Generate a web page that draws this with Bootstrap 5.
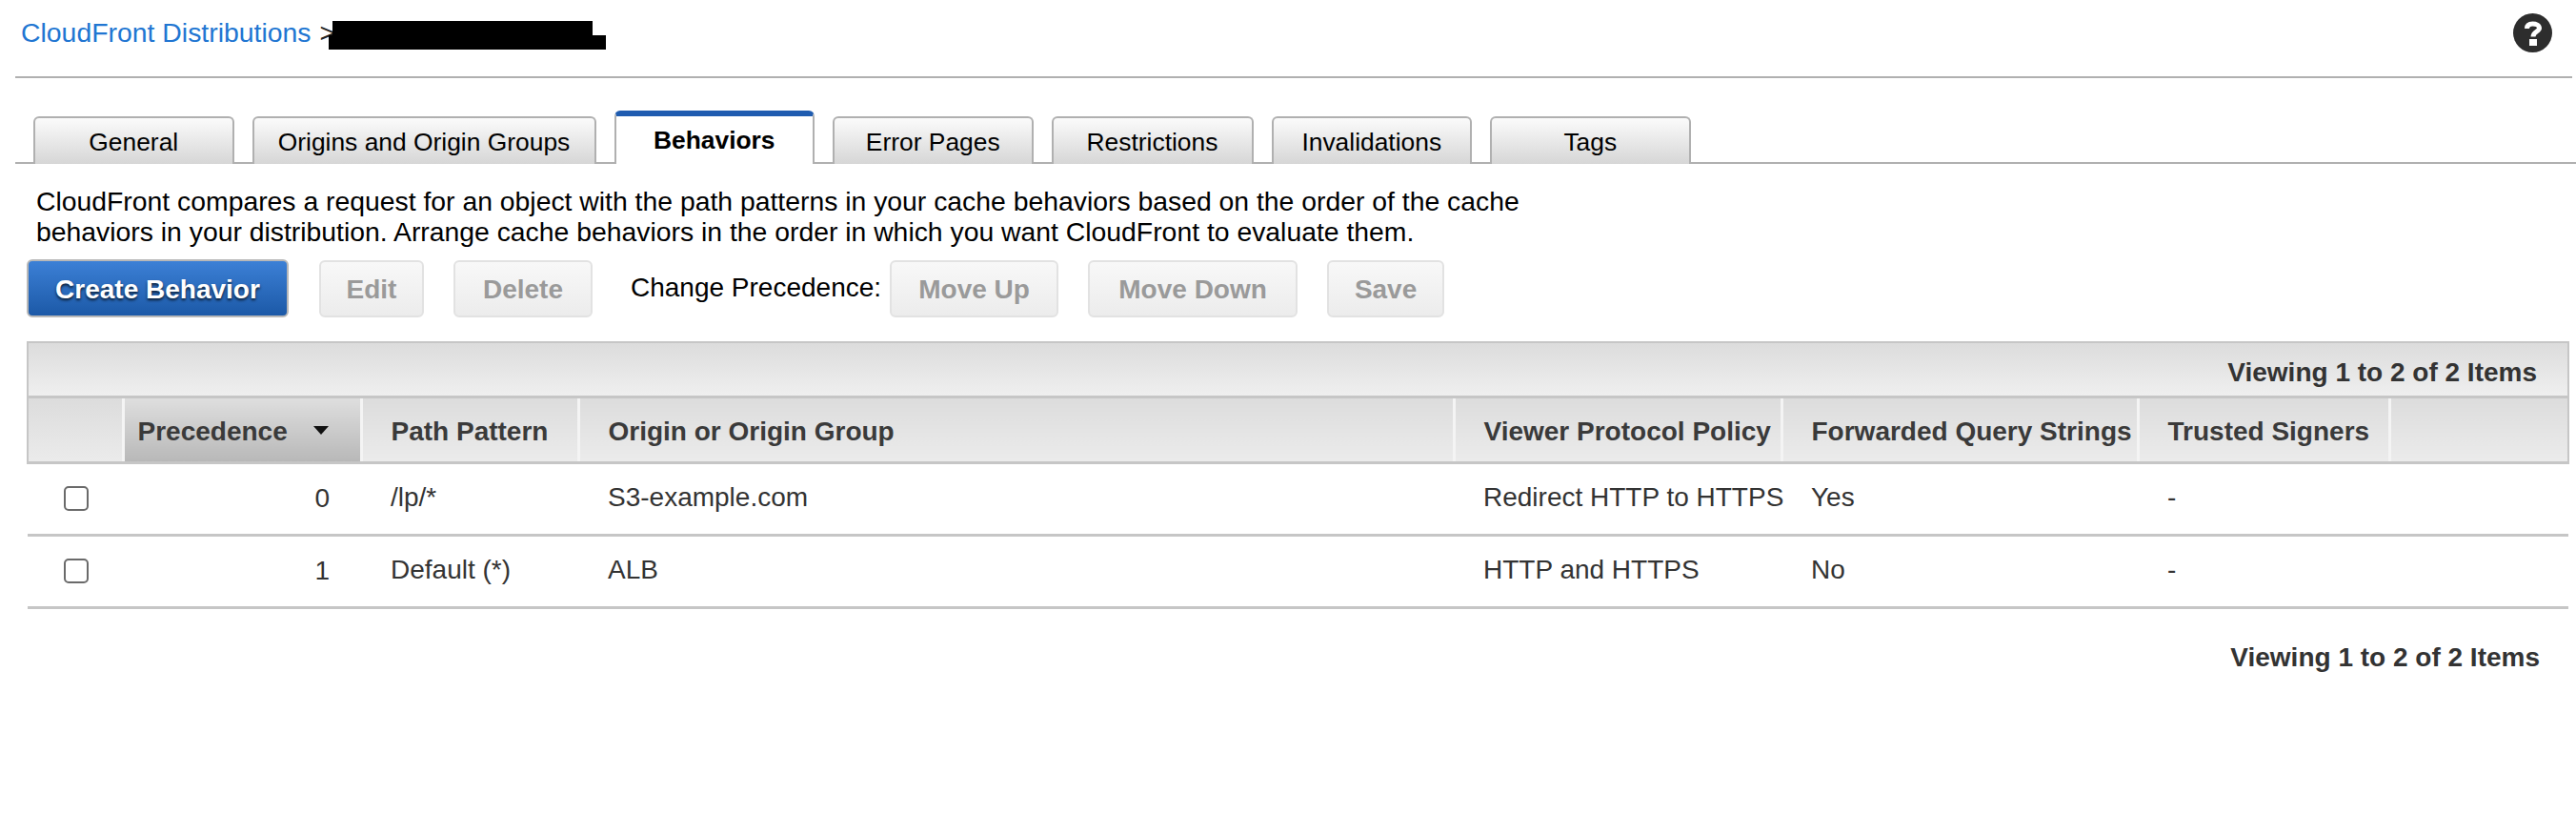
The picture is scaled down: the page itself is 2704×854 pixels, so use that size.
<!DOCTYPE html>
<html lang="en">
<head>
<meta charset="utf-8">
<title>CloudFront Distributions</title>
<link href="https://cdn.jsdelivr.net/npm/bootstrap@5.3.0/dist/css/bootstrap.min.css" rel="stylesheet">
<style>
html,body{height:100%;}
body{background:#fff;color:#000;font-family:"Liberation Sans",Arial,sans-serif;font-size:28px;line-height:32px;overflow:hidden;}
.cf-crumb{height:82px;margin:0 4px 0 16px;border-bottom:2px solid #b0b0b0;padding:18px 0 0 6px;font-size:28.4px;}
.cf-crumb a{color:#2176d2;text-decoration:none;}
.cf-sep{color:#222;margin-left:9px;}
.cf-redact{margin-left:-7px;margin-top:4px;flex:none;}
.cf-help{margin-left:auto;margin-right:21px;margin-top:-4px;flex:none;}
.cf-tabs{margin:34px 0 0 16px;padding-left:19px;gap:19px;border-bottom:2px solid #b0b0b0;height:56px;align-items:flex-end;flex-wrap:nowrap;}
.cf-tabs .nav-link{width:210.5px;height:50px;margin-bottom:-2px;padding:9px 0 0;text-align:center;color:#000;font-size:26.4px;line-height:32px;white-space:nowrap;border:2px solid #b0b0b0;border-bottom:0;border-radius:6px 6px 0 0;background:linear-gradient(#fbfbfb,#d6d6d6);}
.cf-tabs .nav-item:nth-child(2) .nav-link{width:361px;}
.cf-tabs .nav-item:nth-child(5) .nav-link{width:212px;}
.cf-tabs .nav-link.active{height:56px;padding-top:9px;font-weight:700;color:#000;background:#fff;border:2px solid #b0b0b0;border-top:6px solid #1f5cb0;border-bottom:0;}
.cf-desc{margin:23px 0 0 38px;width:1600px;font-size:28.35px;}
.cf-actions{margin:13px 0 0 28px;height:61px;align-items:center;}
.cf-btn{height:60px;padding:2px 0 0;font-family:inherit;font-size:28px;line-height:1;font-weight:700;border-radius:6px;flex:none;}
.cf-btn.cf-dis,.cf-btn.cf-dis:disabled{color:#9a9a9a;opacity:1;background:linear-gradient(#f8f8f8,#ececec);border:2px solid #e2e2e2;}
.cf-btn.cf-pri{width:275px;height:61px;color:#fff;background:linear-gradient(#3c80d6,#1c59a7);border:2px solid #b8b8b8;text-shadow:0 2px 3px rgba(0,0,0,.75);margin-right:32px;}
.cf-w1{width:110px;margin-right:31px;}
.cf-w2{width:146px;margin-right:40px;}
.cf-w3{width:177px;margin-right:31px;}
.cf-w4{width:220px;margin-right:31px;}
.cf-w5{width:123px;}
.cf-label{margin-right:9px;white-space:nowrap;margin-top:-1px;}
.cf-grid{margin:25px 7px 0 28px;width:auto;}
.cf-bar{height:60px;border:2px solid #c6c6c6;border-bottom-width:3px;background:linear-gradient(#dcdcdc,#efefef);color:#333;font-weight:700;padding:15px 32px 0;text-align:right;}
.cf-tbl{table-layout:fixed;width:100%;margin:0;border-collapse:collapse;color:#333;}
.cf-tbl th,.cf-tbl td{padding:0 0 0 30px;white-space:nowrap;box-shadow:none;background:none;color:inherit;vertical-align:middle;}
.cf-tbl thead th{height:67px;padding-top:5px;background:linear-gradient(#dcdcdc,#ebebeb);font-weight:700;border-bottom:3px solid #c6c6c6;border-right:3px solid #f4f4f4;border-top:0;color:#3a3a3a;}
.cf-tbl thead th:first-child{border-left:2px solid #c6c6c6;}
.cf-tbl thead th:last-child{border-right:2px solid #c6c6c6;}
.cf-tbl thead th.cf-sorted{background:linear-gradient(#dedede,#b8b8b8);padding-left:14px;}
.cf-tbl td{height:76px;border-bottom:3px solid #c6c6c6;padding:0 0 2px 31px;}
.cf-tbl td.cf-chk{padding:0 0 0 38px;}
.cf-tbl td.cf-num{text-align:right;padding:0 33px 0 0;}
.cf-tbl .form-check-input{width:26px;height:26px;margin:0;border:2px solid #6a6a6a;border-radius:5px;float:none;display:block;}
.cf-arrow{margin-left:27px;vertical-align:6px;}
.cf-foot{margin:35px 38px 0 0;text-align:right;color:#333;font-weight:700;}
</style>
</head>
<body>
<div class="cf-crumb d-flex align-items-start">
  <a href="#">CloudFront Distributions</a><span class="cf-sep">&gt;</span>
  <svg class="cf-redact" width="291" height="30" viewBox="0 0 291 30"><path d="M4 0H277V15H291V30H0V15H4Z" fill="#000"/></svg>
  <svg class="cf-help" width="41" height="41" viewBox="0 0 41 41"><circle cx="20.5" cy="20.5" r="20.5" fill="#2d2d2d"/><path d="M14.5 16C14.5 12.3 17 11 20.5 11C24 11 27.5 12.4 27.5 15.6C27.5 19.2 21 19 21 24.5" fill="none" stroke="#fff" stroke-width="5"/><rect x="17" y="27" width="8" height="7" fill="#fff"/></svg>
</div>
<ul class="nav cf-tabs">
  <li class="nav-item"><a class="nav-link" href="#">General</a></li>
  <li class="nav-item"><a class="nav-link" href="#">Origins and Origin Groups</a></li>
  <li class="nav-item"><a class="nav-link active" href="#">Behaviors</a></li>
  <li class="nav-item"><a class="nav-link" href="#">Error Pages</a></li>
  <li class="nav-item"><a class="nav-link" href="#">Restrictions</a></li>
  <li class="nav-item"><a class="nav-link" href="#">Invalidations</a></li>
  <li class="nav-item"><a class="nav-link" href="#">Tags</a></li>
</ul>
<p class="cf-desc mb-0">CloudFront compares a request for an object with the path patterns in your cache behaviors based on the order of the cache behaviors in your distribution. Arrange cache behaviors in the order in which you want CloudFront to evaluate them.</p>
<div class="cf-actions d-flex">
  <button class="btn cf-btn cf-pri" type="button">Create Behavior</button>
  <button class="btn cf-btn cf-dis cf-w1" type="button" disabled>Edit</button>
  <button class="btn cf-btn cf-dis cf-w2" type="button" disabled>Delete</button>
  <span class="cf-label">Change Precedence:</span>
  <button class="btn cf-btn cf-dis cf-w3" type="button" disabled>Move Up</button>
  <button class="btn cf-btn cf-dis cf-w4" type="button" disabled>Move Down</button>
  <button class="btn cf-btn cf-dis cf-w5" type="button" disabled>Save</button>
</div>
<div class="cf-grid">
  <div class="cf-bar">Viewing 1 to 2 of 2 Items</div>
  <table class="table cf-tbl">
    <colgroup><col style="width:100px"><col style="width:250px"><col style="width:228px"><col style="width:919px"><col style="width:344px"><col style="width:374px"><col style="width:264px"><col></colgroup>
    <thead><tr>
      <th></th>
      <th class="cf-sorted">Precedence<svg class="cf-arrow" width="16" height="9" viewBox="0 0 16 9"><path d="M0 0H16L8 9Z" fill="#111"/></svg></th>
      <th>Path Pattern</th><th>Origin or Origin Group</th><th>Viewer Protocol Policy</th><th>Forwarded Query Strings</th><th>Trusted Signers</th><th></th>
    </tr></thead>
    <tbody>
      <tr><td class="cf-chk"><input class="form-check-input" type="checkbox" aria-label="Select row 0"></td><td class="cf-num">0</td><td>/lp/*</td><td>S3-example.com</td><td>Redirect HTTP to HTTPS</td><td>Yes</td><td>-</td><td></td></tr>
      <tr><td class="cf-chk"><input class="form-check-input" type="checkbox" aria-label="Select row 1"></td><td class="cf-num">1</td><td>Default (*)</td><td>ALB</td><td>HTTP and HTTPS</td><td>No</td><td>-</td><td></td></tr>
    </tbody>
  </table>
</div>
<div class="cf-foot">Viewing 1 to 2 of 2 Items</div>
<script src="https://cdn.jsdelivr.net/npm/bootstrap@5.3.0/dist/js/bootstrap.bundle.min.js"></script>
</body>
</html>
